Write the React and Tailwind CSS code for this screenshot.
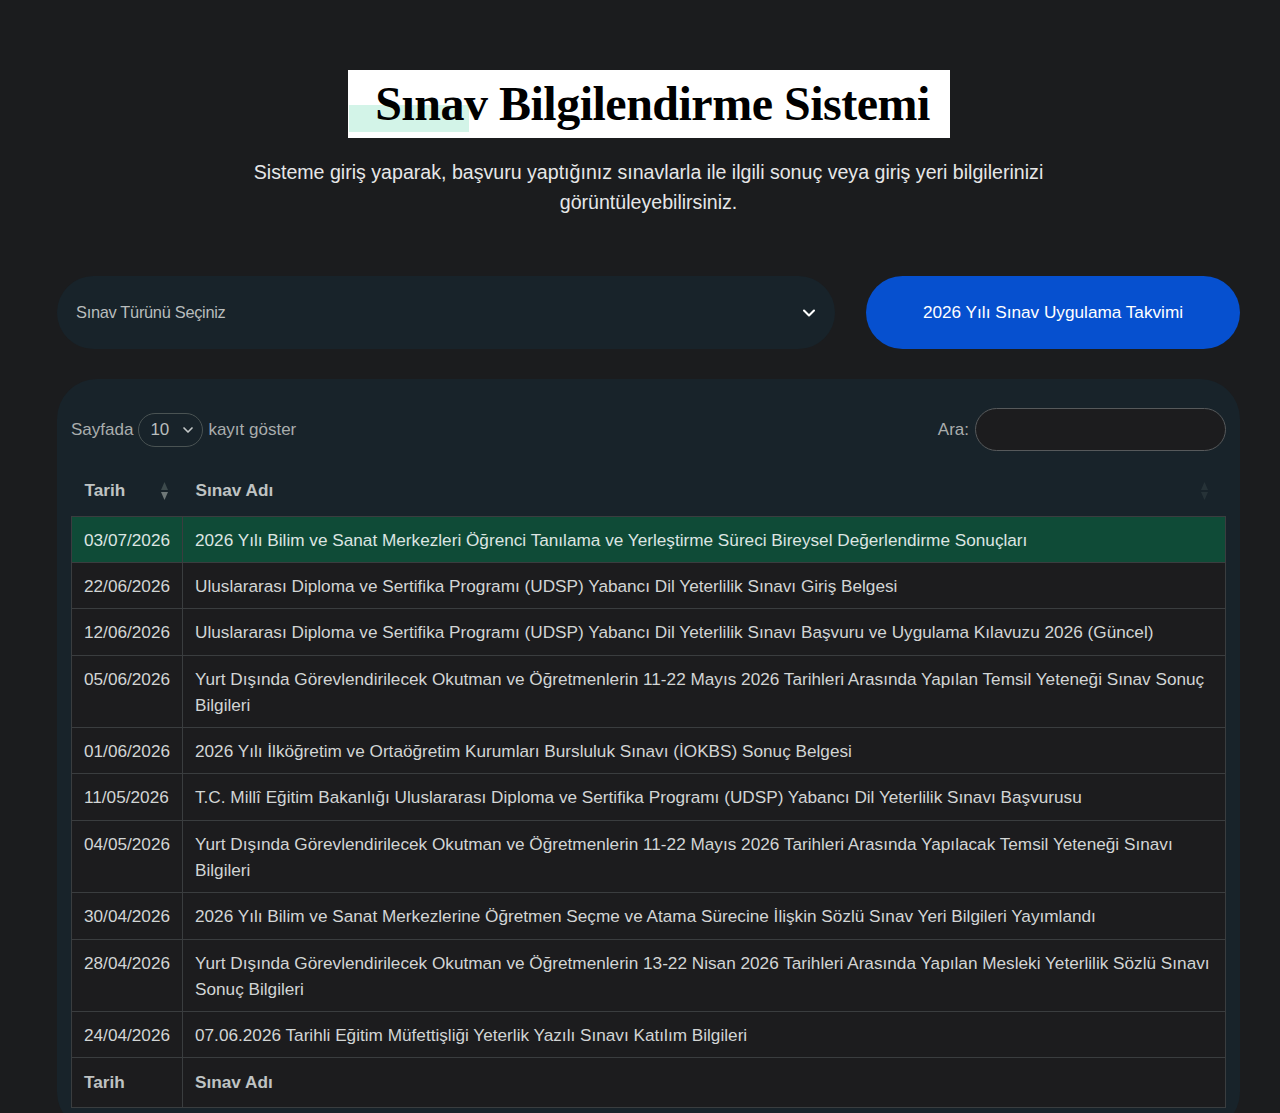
import React from 'react';
import { ChevronDown } from 'lucide-react';

const rows = [
  { date: '03/07/2026', name: '2026 Yılı Bilim ve Sanat Merkezleri Öğrenci Tanılama ve Yerleştirme Süreci Bireysel Değerlendirme Sonuçları', active: true },
  { date: '22/06/2026', name: 'Uluslararası Diploma ve Sertifika Programı (UDSP) Yabancı Dil Yeterlilik Sınavı Giriş Belgesi' },
  { date: '12/06/2026', name: 'Uluslararası Diploma ve Sertifika Programı (UDSP) Yabancı Dil Yeterlilik Sınavı Başvuru ve Uygulama Kılavuzu 2026 (Güncel)' },
  { date: '05/06/2026', name: 'Yurt Dışında Görevlendirilecek Okutman ve Öğretmenlerin 11-22 Mayıs 2026 Tarihleri Arasında Yapılan Temsil Yeteneği Sınav Sonuç Bilgileri' },
  { date: '01/06/2026', name: '2026 Yılı İlköğretim ve Ortaöğretim Kurumları Bursluluk Sınavı (İOKBS) Sonuç Belgesi' },
  { date: '11/05/2026', name: 'T.C. Millî Eğitim Bakanlığı Uluslararası Diploma ve Sertifika Programı (UDSP) Yabancı Dil Yeterlilik Sınavı Başvurusu' },
  { date: '04/05/2026', name: 'Yurt Dışında Görevlendirilecek Okutman ve Öğretmenlerin 11-22 Mayıs 2026 Tarihleri Arasında Yapılacak Temsil Yeteneği Sınavı Bilgileri' },
  { date: '30/04/2026', name: '2026 Yılı Bilim ve Sanat Merkezlerine Öğretmen Seçme ve Atama Sürecine İlişkin Sözlü Sınav Yeri Bilgileri Yayımlandı' },
  { date: '28/04/2026', name: 'Yurt Dışında Görevlendirilecek Okutman ve Öğretmenlerin 13-22 Nisan 2026 Tarihleri Arasında Yapılan Mesleki Yeterlilik Sözlü Sınavı Sonuç Bilgileri' },
  { date: '24/04/2026', name: '07.06.2026 Tarihli Eğitim Müfettişliği Yeterlik Yazılı Sınavı Katılım Bilgileri' }
];

const SortIcon = ({ dim }) => (
  <svg width="9" height="20" viewBox="0 0 9 20" className={dim ? 'opacity-40' : ''}>
    <path d="M4.5 1 L8 9 H1 Z" fill="#3d4a4c" />
    <path d="M4.5 19 L8 11 H1 Z" fill={dim ? '#3d4a4c' : '#6f7878'} />
  </svg>
);

const App = () => {
  return (
    <div className="min-h-screen bg-[#1b1c1e] font-['Liberation_Sans',Arial,sans-serif] pl-[57px] pr-[40px] pt-[70px] pb-10">
      <div className="flex flex-col items-center">
        <div className="relative bg-white h-[68px] w-[602px] flex items-center justify-center">
          <div className="absolute left-px top-[35px] w-[120px] h-[27px] bg-[#d3f4e8]" />
          <h1 className="relative font-['Liberation_Serif','Times_New_Roman',serif] font-bold text-[48px] leading-none tracking-[-0.5px] text-black pl-2">
            Sınav Bilgilendirme Sistemi
          </h1>
        </div>
        <p className="mt-[19px] w-[830px] text-center text-[19.6px] leading-[30px] text-[#e6e7e8]">
          Sisteme giriş yaparak, başvuru yaptığınız sınavlarla ile ilgili sonuç veya giriş yeri bilgilerinizi görüntüleyebilirsiniz.
        </p>
      </div>

      <div className="mt-[59px] flex gap-[31px]">
        <div className="flex-1 h-[73px] rounded-full bg-[#18232a] flex items-center justify-between pl-[19px] pr-[16px]">
          <span className="text-[16.4px] text-[#b9bdbd] tracking-[-0.3px]">Sınav Türünü Seçiniz</span>
          <ChevronDown className="h-5 w-5 text-white" strokeWidth={2.5} />
        </div>
        <button className="w-[374px] h-[73px] rounded-full bg-[#0650cf] text-white text-[17.2px]">
          2026 Yılı Sınav Uygulama Takvimi
        </button>
      </div>

      <div className="mt-[30px] rounded-[40px] bg-[#18232a] px-[14px] pt-[29px] pb-6">
        <div className="flex items-center justify-between h-[43px]">
          <div className="flex items-center gap-[5px] text-[17px] text-[#a9adad]">
            <span>Sayfada</span>
            <div className="w-[65px] h-[34px] rounded-full border border-[#4a5353] flex items-center justify-between pl-[11px] pr-[6px] text-[#b9bdbd]">
              <span>10</span>
              <ChevronDown className="h-4 w-4 text-[#c4c8c8]" strokeWidth={2.5} />
            </div>
            <span>kayıt göster</span>
          </div>
          <div className="flex items-center gap-[6px] text-[17px] text-[#a9adad]">
            <span>Ara:</span>
            <div className="w-[251px] h-[43px] rounded-full border border-[#56595b] bg-[#1c1c1e]" />
          </div>
        </div>

        <table className="mt-4 w-full border-collapse text-[17.2px]">
          <thead>
            <tr className="h-[49px] text-left text-[#bfc3c3] font-bold">
              <th className="w-[111px] pl-[13px] pr-[14px]">
                <div className="flex items-center justify-between">
                  <span>Tarih</span>
                  <SortIcon />
                </div>
              </th>
              <th className="pl-[13px] pr-[17px]">
                <div className="flex items-center justify-between">
                  <span>Sınav Adı</span>
                  <SortIcon dim />
                </div>
              </th>
            </tr>
          </thead>
          <tbody>
            {rows.map((r) => (
              <tr key={r.date + r.name} className={r.active ? 'bg-[#0f4b37] text-[#dde5e2]' : 'bg-[#1c1c1e] text-[#d2d5d5]'}>
                <td className="align-top border border-[#3a3d3f] pl-[12px] pr-2 pt-[10px] pb-[9.4px] leading-[26px] whitespace-nowrap">{r.date}</td>
                <td className="align-top border border-[#3a3d3f] pl-[12px] pr-3 pt-[10px] pb-[9.4px] leading-[26px]">{r.name}</td>
              </tr>
            ))}
          </tbody>
          <tfoot>
            <tr className="h-[50px] bg-[#1c1c1e] text-left text-[#bfc3c3] font-bold">
              <th className="border border-[#3a3d3f] pl-[12px]">Tarih</th>
              <th className="border border-[#3a3d3f] pl-[12px]">Sınav Adı</th>
            </tr>
          </tfoot>
        </table>
      </div>
    </div>
  );
};

export default App;
